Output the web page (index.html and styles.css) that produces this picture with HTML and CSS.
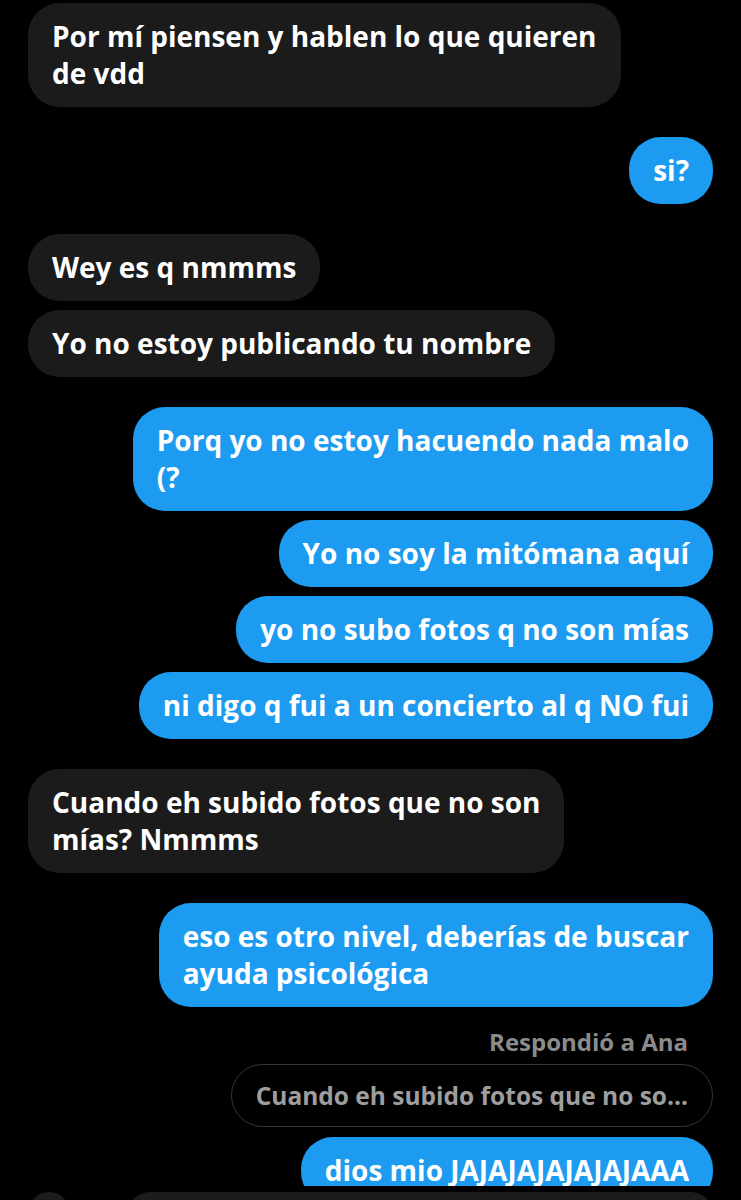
FILE: index.html
```html
<!DOCTYPE html>
<html lang="es">
<head>
  <meta charset="UTF-8" />
  <meta name="viewport" content="width=device-width, initial-scale=1.0" />
  <title>Mensajes</title>
  <link rel="stylesheet" href="styles.css">
</head>
<body>
  <div class="thread">
    <div class="msg in">Por mí piensen y hablen lo que quieren<br>de vdd</div>

    <div class="msg out group">si?</div>

    <div class="msg in group">Wey es q nmmms</div>
    <div class="msg in">Yo no estoy publicando tu nombre</div>

    <div class="msg out group">Porq yo no estoy hacuendo nada malo<br>(?</div>
    <div class="msg out">Yo no soy la mitómana aquí</div>
    <div class="msg out">yo no subo fotos q no son mías</div>
    <div class="msg out">ni digo q fui a un concierto al q NO fui</div>

    <div class="msg in group">Cuando eh subido fotos que no son<br>mías? Nmmms</div>

    <div class="msg out group">eso es otro nivel, deberías de buscar<br>ayuda psicológica</div>

    <div class="reply-label">Respondió a Ana</div>
    <div class="reply-quote">Cuando eh subido fotos que no so...</div>
    <div class="msg out reply">dios mio JAJAJAJAJAJAJAAA</div>
  </div>

  <div class="composer">
    <div class="composer-btn"></div>
    <div class="composer-input"></div>
  </div>
</body>
</html>
```

FILE: styles.css
```css
* {
  margin: 0;
  padding: 0;
  box-sizing: border-box;
}

body {
  background: #000;
  color: #fff;
  font-family: 'Open Sans', 'Liberation Sans', sans-serif;
  font-weight: 700;
  width: 741px;
  height: 1200px;
  overflow: hidden;
}

.thread {
  height: 1186px;
  overflow: hidden;
  padding: 3px 28px 0;
  display: flex;
  flex-direction: column;
}

.msg {
  white-space: nowrap;
  padding: 15px 24px;
  border-radius: 32px;
  font-size: 28px;
  line-height: 37px;
  margin-top: 9px;
}

.msg:first-child {
  margin-top: 0;
}

.msg.group {
  margin-top: 30px;
}

.in {
  align-self: flex-start;
  background: #1b1b1b;
}

.out {
  align-self: flex-end;
  background: #1d9bf0;
}

.reply-label {
  align-self: flex-end;
  margin-top: 21px;
  padding-right: 25px;
  font-size: 24px;
  line-height: 28px;
  color: #8b8b8b;
}

.reply-quote {
  align-self: flex-end;
  margin-top: 8px;
  padding: 12px 24px;
  border: 1px solid #363636;
  border-radius: 32px;
  font-size: 24.5px;
  line-height: 37px;
  color: #9e9e9e;
}

.msg.reply {
  margin-top: 10px;
}

.composer {
  display: flex;
  gap: 58px;
  padding: 6px 28px 0 28px;
}

.composer-btn {
  width: 42px;
  height: 42px;
  border-radius: 50%;
  background: #1c1c1c;
}

.composer-input {
  flex: 1;
  height: 44px;
  border-radius: 22px;
  background: #1c1c1c;
}
```
